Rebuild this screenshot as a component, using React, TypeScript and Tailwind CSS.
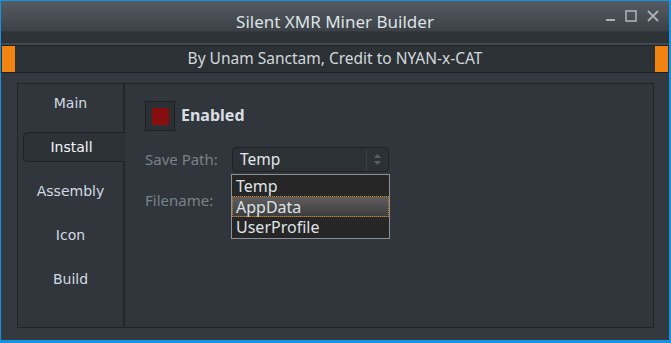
import React from "react";

const tabs = ["Main", "Install", "Assembly", "Icon", "Build"];
const paths = ["Temp", "AppData", "UserProfile"];

function WindowButtons() {
  return (
    <div className="absolute right-[10px] top-[9px] flex items-start gap-[10px] text-[#aab1b7]">
      <svg width="9" height="13" viewBox="0 0 9 13">
        <rect x="0" y="9" width="9" height="2" fill="currentColor" />
      </svg>
      <svg width="12" height="12" viewBox="0 0 12 12">
        <rect x="1" y="1" width="10" height="10" fill="none" stroke="currentColor" strokeWidth="1.6" />
      </svg>
      <svg width="12" height="12" viewBox="0 0 12 12">
        <path d="M1 1 L11 11 M11 1 L1 11" stroke="currentColor" strokeWidth="1.8" />
      </svg>
    </div>
  );
}

export default function App() {
  const selected = "Install";

  return (
    <div
      className="w-[671px] h-[343px] bg-[#1592e2] pl-[1px] pt-[1px] pr-[2px] pb-[3px]"
      style={{ fontFamily: '"Noto Sans", "DejaVu Sans", sans-serif' }}
    >
      <div className="flex h-full flex-col bg-[#33393e]">
        {/* title bar */}
        <div className="relative flex h-[42px] shrink-0 items-center justify-center bg-[linear-gradient(to_bottom,#555b61_0%,#3c4247_70%,#2e3338_74%,#2e3338_100%)] pb-[1px]">
          <span className="text-[17px] text-[#dde2e6]">Silent XMR Miner Builder</span>
          <WindowButtons />
        </div>
        <div className="h-[2px] bg-[#43494e]" />

        {/* banner */}
        <div className="flex h-[28px] shrink-0 items-stretch border-y border-[#1d2125] bg-[#2c3136] px-[1px]">
          <div className="w-[13px] bg-[#f08312]" />
          <div className="flex flex-1 items-center justify-center text-[15.5px] text-[#d3d8dc]">
            By Unam Sanctam, Credit to NYAN-x-CAT
          </div>
          <div className="w-[13px] bg-[#f08312]" />
        </div>

        {/* body */}
        <div className="flex flex-1 pl-[16px] pr-[15px] pt-[10px] pb-[12px]">
          <div className="flex flex-1 border border-[#1f2428] bg-[#30363b]">
            {/* tab list */}
            <div className="flex w-[107px] shrink-0 flex-col gap-[14px] border-r-2 border-[#22272b] pt-[4px]">
              {tabs.map((t) =>
                t === selected ? (
                  <div
                    key={t}
                    className="-mr-[2px] ml-[5px] flex h-[30px] items-center justify-center rounded-l-[5px] border border-r-0 border-[#1e2226] bg-[#2d3237] pr-[6px] text-[14px] text-[#f2f6fa]"
                    style={{ fontFamily: '"DejaVu Sans", sans-serif' }}
                  >
                    {t}
                  </div>
                ) : (
                  <div
                    key={t}
                    className="flex h-[30px] items-center justify-center text-[14px] text-[#d2dae3]"
                    style={{ fontFamily: '"DejaVu Sans", sans-serif' }}
                  >
                    {t}
                  </div>
                )
              )}
            </div>

            {/* content */}
            <div className="flex flex-1 flex-col pl-[20px] pt-[17px]">
              <div className="flex h-[30px] items-center gap-[6px]">
                <div className="flex h-[30px] w-[30px] items-center justify-center border border-[#1d2125] bg-[#2b3035]">
                  <div className="h-[17px] w-[17px] bg-[#870d0f]" />
                </div>
                <span className="pb-[2px] text-[16px] font-bold text-[#d9dee3]">Enabled</span>
              </div>

              <div className="mt-[16px] flex h-[25px] items-center">
                <span className="w-[87px] text-[15px] text-[#7a8289]">Save Path:</span>
                <div className="relative h-[25px] w-[157px]">
                  <div className="flex h-full items-center rounded-[4px] border border-[#1e2226] bg-[#2c3136]">
                    <span className="flex-1 pl-[7px] text-[15.5px] text-[#e4e8ec]">Temp</span>
                    <div className="flex h-full w-[22px] items-center justify-center border-l border-[#3a4045]">
                      <svg width="7" height="11" viewBox="0 0 7 11">
                        <path d="M3.5 0 L7 4 L0 4 Z M3.5 11 L7 7 L0 7 Z" fill="#5a6167" />
                      </svg>
                    </div>
                  </div>
                  <div className="absolute left-[-1px] top-[27px] z-10 w-[159px] border border-[#8c9196] bg-[#262626] py-px">
                    {paths.map((p) => (
                      <div
                        key={p}
                        className={
                          p === "AppData"
                            ? "flex h-[21px] items-center border border-dotted border-[#d77d1e] bg-[linear-gradient(to_bottom,#5e5e5e,#3d3d3d)] pl-[3px] text-[16px] text-[#dfe3e7]"
                            : "flex h-[20px] items-center pl-[4px] text-[16px] text-[#dfe3e7]"
                        }
                      >
                        {p}
                      </div>
                    ))}
                  </div>
                </div>
              </div>

              <div className="mt-[16px] flex h-[25px] items-center">
                <span className="text-[15px] text-[#7a8289]">Filename:</span>
              </div>
            </div>
          </div>
        </div>
      </div>
    </div>
  );
}
